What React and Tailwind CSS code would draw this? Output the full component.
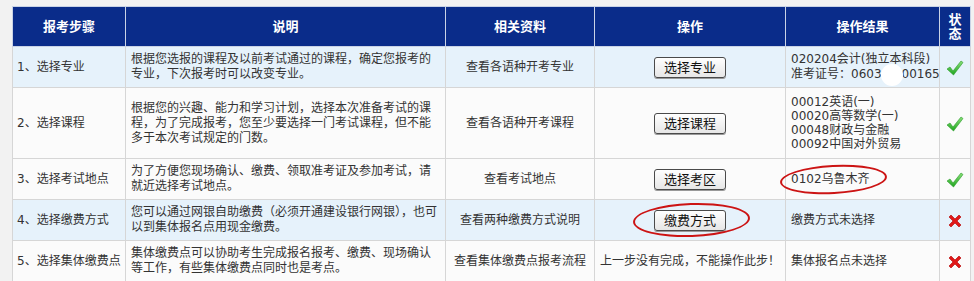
const Check = () => (
  <svg width="18" height="16" viewBox="0 0 18 16" className="inline-block">
    <defs>
      <linearGradient id="ck" x1="0" y1="0" x2="0" y2="1">
        <stop offset="0" stopColor="#8be07a" />
        <stop offset="1" stopColor="#1ea51e" />
      </linearGradient>
    </defs>
    <path d="M1 9 L4 7 L7 11 L15 1 L17 2.5 L7.5 15 Z" fill="url(#ck)" stroke="#2a9a2a" strokeWidth="0.6" />
  </svg>
)

const Cross = () => (
  <svg width="16" height="16" viewBox="0 0 16 16" className="inline-block">
    <path d="M2 4 L4 2 L8 6 L12 2 L14 4 L10 8 L14 12 L12 14 L8 10 L4 14 L2 12 L6 8 Z" fill="#e01818" stroke="#b00000" strokeWidth="0.6" />
  </svg>
)

const Btn = ({ children }) => (
  <button className="h-[21px] w-[72px] rounded-[3px] border border-[#4a4a4a] bg-gradient-to-b from-[#ffffff] to-[#e6e6e6] text-[13px] leading-[19px] text-[#111] shadow-[0_1px_0_#999]">
    {children}
  </button>
)

const rows = [
  {
    step: '1、选择专业',
    desc: '根据您选报的课程及以前考试通过的课程，确定您报考的专业，下次报考时可以改变专业。',
    info: '查看各语种开考专业',
    op: <Btn>选择专业</Btn>,
    result: (
      <div className="whitespace-nowrap">
        <div>020204会计(独立本科段)</div>
        <div>
          准考证号：0603
          {/* masked digits */}
          <span className="relative inline-block h-[14px] w-[20px] align-middle">
            <span className="absolute left-[-1px] top-[-4px] h-[22px] w-[22px] rounded-full bg-white" />
          </span>
          00165
        </div>
      </div>
    ),
    ok: true,
    h: 'h-[41px]',
    bg: 'bg-[#e6f2fb]',
  },
  {
    step: '2、选择课程',
    desc: '根据您的兴趣、能力和学习计划，选择本次准备考试的课程，为了完成报考，您至少要选择一门考试课程，但不能多于本次考试规定的门数。',
    info: '查看各语种开考课程',
    op: <Btn>选择课程</Btn>,
    result: (
      <div className="whitespace-nowrap leading-[14px]">
        <div>00012英语(一)</div>
        <div>00020高等数学(一)</div>
        <div>00048财政与金融</div>
        <div>00092中国对外贸易</div>
      </div>
    ),
    ok: true,
    h: 'h-[71px]',
    bg: 'bg-[#fbfbfb]',
  },
  {
    step: '3、选择考试地点',
    desc: '为了方便您现场确认、缴费、领取准考证及参加考试，请就近选择考试地点。',
    info: '查看考试地点',
    op: <Btn>选择考区</Btn>,
    result: (
      <div className="relative">
        0102乌鲁木齐
        <span className="absolute left-[-11px] top-[-7px] h-[29px] w-[107px] rotate-[-3deg] rounded-[50%] border-2 border-[#cc1414]" />
      </div>
    ),
    ok: true,
    h: 'h-[41px]',
    bg: 'bg-[#fbfbfb]',
  },
  {
    step: '4、选择缴费方式',
    desc: '您可以通过网银自助缴费（必须开通建设银行网银），也可以到集体报名点用现金缴费。',
    info: '查看两种缴费方式说明',
    op: (
      <div className="relative inline-block align-middle">
        <Btn>缴费方式</Btn>
        <span className="absolute left-[-21px] top-[-7px] h-[34px] w-[117px] rotate-[-2deg] rounded-[50%] border-2 border-[#cc1414]" />
      </div>
    ),
    result: '缴费方式未选择',
    ok: false,
    h: 'h-[41px]',
    bg: 'bg-[#e6f2fb]',
  },
  {
    step: '5、选择集体缴费点',
    desc: '集体缴费点可以协助考生完成报名报考、缴费、现场确认等工作，有些集体缴费点同时也是考点。',
    info: '查看集体缴费点报考流程',
    op: <span className="whitespace-nowrap">上一步没有完成，不能操作此步！</span>,
    result: '集体报名点未选择',
    ok: false,
    h: 'h-[41px]',
    bg: 'bg-[#fbfbfb]',
  },
]

export default function App() {
  return (
    <div
      className="h-[281px] w-[974px] overflow-hidden bg-[#f2f2f2] pl-[12px] pt-[6px] text-[12px] text-[#333]"
      style={{ fontFamily: '"DejaVu Sans", "Noto Sans CJK SC", sans-serif' }}
    >
      <table className="w-[958px] table-fixed border-collapse">
        <colgroup>
          <col className="w-[113px]" />
          <col className="w-[320px]" />
          <col className="w-[149px]" />
          <col className="w-[191px]" />
          <col className="w-[154px]" />
          <col className="w-[31px]" />
        </colgroup>
        <thead>
          <tr className="h-[40px] bg-[#0a2c8a] text-[13px] font-bold text-white">
            <th className="border border-[#c9d3e6]">报考步骤</th>
            <th className="border border-[#c9d3e6]">说明</th>
            <th className="border border-[#c9d3e6]">相关资料</th>
            <th className="border border-[#c9d3e6]">操作</th>
            <th className="border border-[#c9d3e6]">操作结果</th>
            <th className="border border-[#c9d3e6] px-[6px] leading-[14px]">状态</th>
          </tr>
        </thead>
        <tbody>
          {rows.map((r, idx) => (
            <tr key={idx} className={`${r.h} ${r.bg}`}>
              <td className="whitespace-nowrap border border-[#d6d6d6] pl-[4px]">{r.step}</td>
              <td className="border border-[#d6d6d6] px-[5px] leading-[15px]">{r.desc}</td>
              <td className="whitespace-nowrap border border-[#d6d6d6] text-center">{r.info}</td>
              <td className="border border-[#d6d6d6] text-center">{r.op}</td>
              <td className="border border-[#d6d6d6] pl-[5px] leading-[15px]">{r.result}</td>
              <td className="border border-[#d6d6d6] text-center">{r.ok ? <Check /> : <Cross />}</td>
            </tr>
          ))}
        </tbody>
      </table>
    </div>
  )
}
